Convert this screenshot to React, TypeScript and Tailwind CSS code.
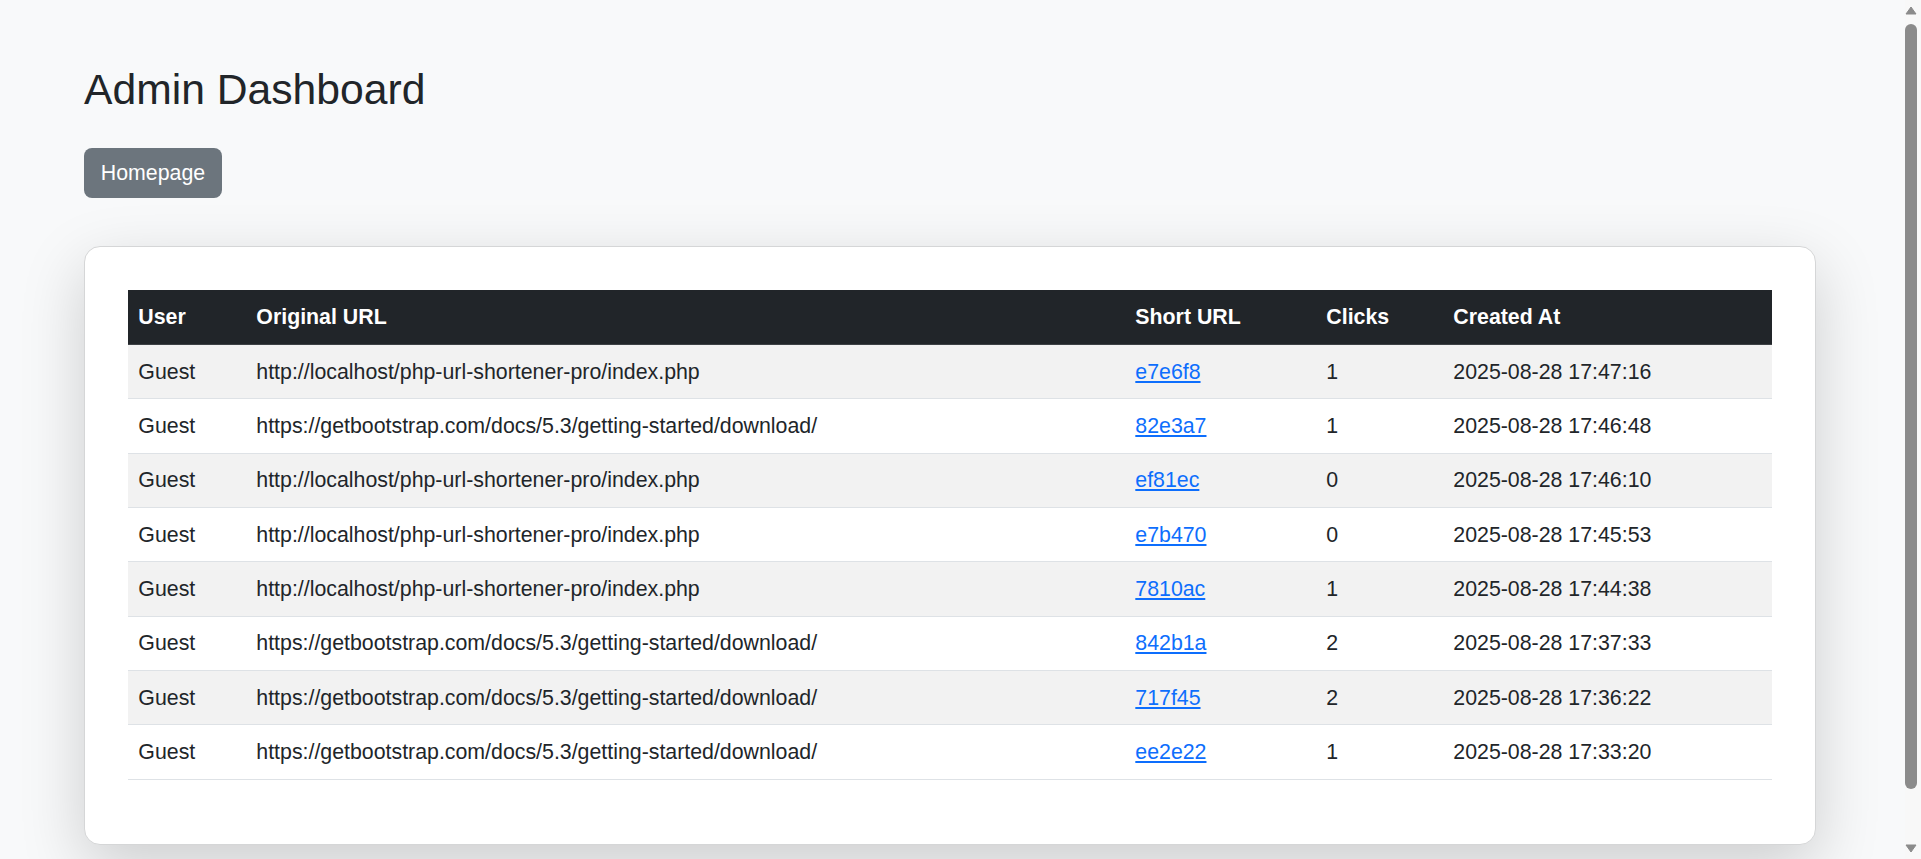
type Link = {
  user: string;
  original: string;
  short: string;
  clicks: number;
  created: string;
};

const LOCAL = "http://localhost/php-url-shortener-pro/index.php";
const BOOT = "https://getbootstrap.com/docs/5.3/getting-started/download/";

const links: Link[] = [
  { user: "Guest", original: LOCAL, short: "e7e6f8", clicks: 1, created: "2025-08-28 17:47:16" },
  { user: "Guest", original: BOOT, short: "82e3a7", clicks: 1, created: "2025-08-28 17:46:48" },
  { user: "Guest", original: LOCAL, short: "ef81ec", clicks: 0, created: "2025-08-28 17:46:10" },
  { user: "Guest", original: LOCAL, short: "e7b470", clicks: 0, created: "2025-08-28 17:45:53" },
  { user: "Guest", original: LOCAL, short: "7810ac", clicks: 1, created: "2025-08-28 17:44:38" },
  { user: "Guest", original: BOOT, short: "842b1a", clicks: 2, created: "2025-08-28 17:37:33" },
  { user: "Guest", original: BOOT, short: "717f45", clicks: 2, created: "2025-08-28 17:36:22" },
  { user: "Guest", original: BOOT, short: "ee2e22", clicks: 1, created: "2025-08-28 17:33:20" },
];

export default function App() {
  return (
    <div className="flex h-[859px] w-full overflow-hidden bg-[#f8f9fa] font-['Liberation_Sans',Arial,sans-serif] text-[#212529]">
      <main className="min-w-0 flex-1 pl-[84px] pt-[64px]">
        <h2 className="mb-[33px] text-[42.67px] font-normal leading-[51.2px]">Admin Dashboard</h2>

        <a
          href="#"
          className="mb-[48px] flex h-[50px] w-[138px] items-center justify-center rounded-[8px] bg-[#6c757d] text-[21.33px] leading-[32px] text-white"
        >
          Homepage
        </a>

        <section className="w-[1732px] rounded-[16px] border border-[#d5d6d7] bg-white p-[42.67px] shadow-[0_21px_64px_rgba(0,0,0,0.175)]">
          <table className="mb-[21.33px] w-full table-fixed border-collapse text-left text-[21.33px] leading-[32px]">
            <thead>
              <tr className="bg-[#212529] text-white">
                <Th className="w-[118px]">User</Th>
                <Th className="w-[879px]">Original URL</Th>
                <Th className="w-[191px]">Short URL</Th>
                <Th className="w-[127px]">Clicks</Th>
                <Th>Created At</Th>
              </tr>
            </thead>
            <tbody>
              {links.map((link, i) => (
                <tr key={link.short} className={i % 2 === 0 ? "bg-[#f2f2f2]" : "bg-white"}>
                  <Td>{link.user}</Td>
                  <Td>{link.original}</Td>
                  <Td>
                    <a href="#" className="text-[#0d6efd] underline">
                      {link.short}
                    </a>
                  </Td>
                  <Td>{link.clicks}</Td>
                  <Td>{link.created}</Td>
                </tr>
              ))}
            </tbody>
          </table>
        </section>
      </main>

      <aside className="flex w-[16px] flex-col bg-[#f8f8f8]">
        <svg width="12" height="9" viewBox="0 0 12 9" className="mt-[6px]">
          <path d="M6 1 L11 8 L1 8 Z" fill="#8b8b8b" stroke="#8b8b8b" strokeLinejoin="round" />
        </svg>
        <div className="mt-[9px] h-[765px] w-[12px] rounded-full bg-[#8b8b8b]" />
        <svg width="12" height="9" viewBox="0 0 12 9" className="mt-[55px]">
          <path d="M1 1 L11 1 L6 8 Z" fill="#8b8b8b" stroke="#8b8b8b" strokeLinejoin="round" />
        </svg>
      </aside>
    </div>
  );
}

function Th({ children, className = "" }: { children: React.ReactNode; className?: string }) {
  return (
    <th className={`border-b border-[#3d4145] px-[10.67px] pt-[10.67px] pb-[11.67px] font-bold ${className}`}>
      {children}
    </th>
  );
}

function Td({ children }: { children: React.ReactNode }) {
  return <td className="border-b border-[#dee2e6] px-[10.67px] py-[10.67px] align-top">{children}</td>;
}
